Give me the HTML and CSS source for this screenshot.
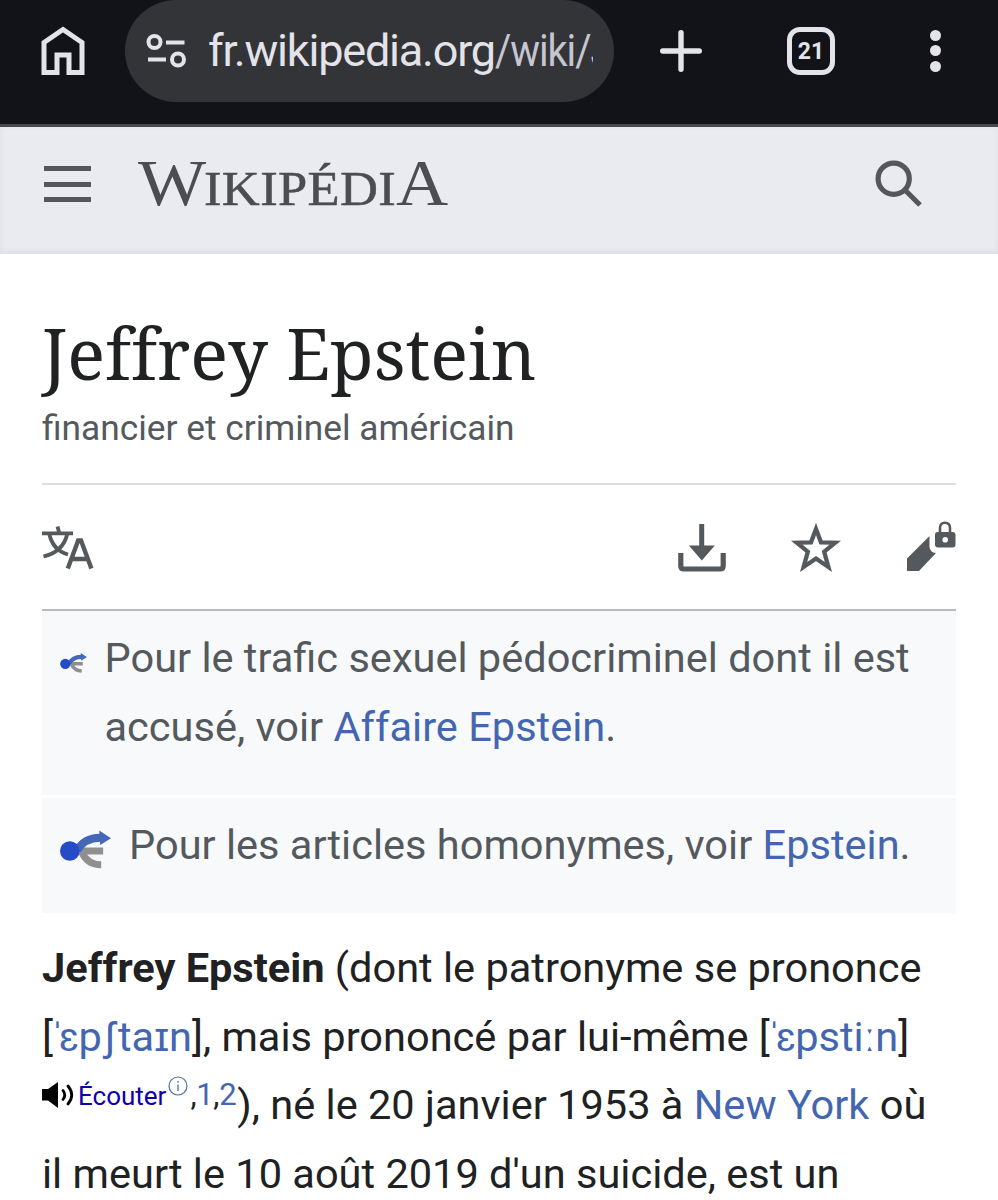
FILE: index.html
```
<!DOCTYPE html>
<html lang="fr">
<head>
  <meta charset="UTF-8">
  <meta name="viewport" content="width=device-width, initial-scale=1.0">
  <title>Jeffrey Epstein — Wikipédia</title>
  <link rel="stylesheet" href="styles.css">
</head>
<body>
  <!-- Browser bar -->
  <div class="browser-bar">
    <svg class="home-icon" width="44" height="50" viewBox="0 0 44 50">
      <path d="M3 46.500V16.500L22 3.500L41 16.500V46.500H28V29H16V46.500Z" fill="none" stroke="#e3e3e9" stroke-width="5"/>
    </svg>
    <div class="address">
      <svg class="tune-icon" width="42" height="36" viewBox="0 0 42 36" fill="none" stroke="#e3e3e9" stroke-width="4">
        <circle cx="8.500" cy="9" r="6"/>
        <path d="M20 9.500H38.500M2 26.500H20"/>
        <circle cx="32" cy="26.500" r="6"/>
      </svg>
      <div class="url"><span class="host">fr.wikipedia.org</span><span class="path">/wiki/J</span></div>
    </div>
    <svg class="plus-icon" width="42" height="42" viewBox="0 0 42 42" stroke="#e3e3e9" stroke-width="5.400" stroke-linecap="round">
      <path d="M21 2.700V39.300M2.700 21H39.300"/>
    </svg>
    <div class="tabs">21</div>
    <div class="dots"><i></i><i></i><i></i></div>
  </div>

  <!-- Site header -->
  <header class="site-header">
    <div class="burger"><i></i><i></i><i></i></div>
    <a class="wordmark"><span class="big">W</span><span class="small">IKIPÉDI</span><span class="big last">A</span></a>
    <svg class="search-icon" width="48" height="48" viewBox="0 0 48 48" fill="none" stroke="#55575b" stroke-width="5.200">
      <circle cx="18.700" cy="18.700" r="15.600"/>
      <path d="M29.500 29.500L45 45"/>
    </svg>
  </header>

  <main>
    <h1>Jeffrey Epstein</h1>
    <p class="subtitle">financier et criminel américain</p>

    <div class="actions">
      <svg class="lang-icon" width="52" height="44" viewBox="0 0 52 44" fill="none" stroke="#54595d" stroke-width="3.800">
        <path d="M15.500 .500L17 6M0 7.300H31M7.300 8C9.500 18 15.500 25.500 26 28.500M25.300 8C22.500 20 14 27.500 1.500 30.500"/>
        <path stroke-width="4.400" d="M25.800 42.500L36.200 14.500H39L49.400 42.500M30 33H45"/>
      </svg>
      <svg class="download-icon" width="48" height="48" viewBox="0 0 48 48">
        <path fill="#54595d" d="M21.200 0H26.200V21.500H36.800L23.800 36.500L10.900 21.500H21.200Z"/>
        <path fill="none" stroke="#54595d" stroke-width="5.200" d="M2.800 29V42Q2.800 45 5.800 45H42.200Q45.200 45 45.200 42V29"/>
      </svg>
      <svg class="star-icon" width="52" height="50" viewBox="0 0 52 50">
        <path fill="none" stroke="#54595d" stroke-width="4.300" d="M26 6L31 19.300L45.200 19.700L34.200 28.700L38.400 44L26 35.500L13.600 44L17.800 28.700L6.800 19.700L21 19.300Z"/>
      </svg>
      <svg class="edit-icon" width="50" height="51" viewBox="0 0 50 51">
        <path fill="#54595d" d="M1 37.500L23.500 15V26Q24 31.500 30 32L13 50H1Z"/>
        <path fill="none" stroke="#54595d" stroke-width="2.600" d="M34 12V7Q34 1.800 39 1.800T44 7V12"/>
        <path fill="#54595d" fill-rule="evenodd" d="M31.500 11H46.500Q49.500 11 49.500 14V23.500Q49.500 26.500 46.500 26.500H32Q29 26.500 29 23.500V14Q29 11 31.500 11ZM39.200 16A2.800 2.800 0 1 0 39.200 21.600A2.800 2.800 0 1 0 39.200 16Z"/>
      </svg>
    </div>

    <div class="hatnote first">
      <svg class="fork-icon" width="27" height="20" viewBox="0 0 52 39">
        <path fill="none" stroke="#8f8f8f" stroke-width="7" d="M21 21H44M22 22Q28 35 42 35"/>
        <path fill="none" stroke="#4467b8" stroke-width="8" d="M17 21Q25 7 42 7.500"/>
        <path fill="#4467b8" d="M40 0L52 8L41 15Z"/>
        <circle cx="10" cy="21" r="10" fill="#264bc8"/>
      </svg>
      <p>Pour le trafic sexuel pédocriminel dont il est<br>accusé, voir <a>Affaire Epstein</a>.</p>
    </div>
    <div class="hatnote second">
      <svg class="fork-icon" width="51" height="39" viewBox="0 0 52 39">
        <path fill="none" stroke="#8f8f8f" stroke-width="7" d="M21 21H44M22 22Q28 35 42 35"/>
        <path fill="none" stroke="#4467b8" stroke-width="8" d="M17 21Q25 7 42 7.500"/>
        <path fill="#4467b8" d="M40 0L52 8L41 15Z"/>
        <circle cx="10" cy="21" r="10" fill="#264bc8"/>
      </svg>
      <p>Pour les articles homonymes, voir <a>Epstein</a>.</p>
    </div>

    <div class="intro">
      <div class="line"><b>Jeffrey Epstein</b> (dont le patronyme se prononce</div>
      <div class="line">[<a><span class="stress">ˈ</span>ɛp<span class="esh">ʃ</span>taɪn</a>], mais prononcé par lui-même [<a><span class="stress">ˈ</span>ɛpstiːn</a>]</div>
      <div class="line"><span class="listen"><svg class="sound-icon" width="33" height="26" viewBox="0 0 33 26">
        <path d="M0 7H6L16 0V26L6 18.500H0Z"/>
        <path fill="none" stroke="#000" stroke-width="2.800" stroke-linecap="round" d="M21 8.500Q24.500 13 21 17.500M26 4Q33.500 13 26 22"/>
      </svg><a class="audio">Écouter</a><svg class="info-icon" width="20" height="20" viewBox="0 0 20 20">
        <circle cx="10" cy="10" r="9" fill="none" stroke="#4f6f9f" stroke-width="1.200"/>
        <path d="M10 8.500V15M10 5V6.800" stroke="#4f6f9f" stroke-width="1.300"/>
      </svg><span class="refs">,<a>1</a>,<a>2</a></span></span>), né le 20 janvier 1953 à <a>New York</a> où</div>
      <div class="line">il meurt le 10 août 2019 d'un suicide, est un</div>
    </div>
  </main>
</body>
</html>
```
FILE: styles.css
```
/* Reset */
body, h1, p {
  margin: 0;
  padding: 0;
}

* {
  box-sizing: border-box;
}

body {
  width: 998px;
  height: 1200px;
  overflow: hidden;
  background-color: #fff;
  color: #202122;
  font-family: Roboto, sans-serif;
  font-size: 41.550px;
}

svg {
  display: block;
  flex: none;
}

a {
  color: #4466b0;
  text-decoration: none;
}

/* Browser bar */
.browser-bar {
  display: flex;
  align-items: flex-start;
  height: 127px;
  background-color: #121318;
  border-bottom: 3px solid #47484c;
  padding-left: 41px;
}

.home-icon {
  margin-top: 26px;
}

.address {
  display: flex;
  width: 489px;
  height: 102px;
  margin-left: 40px;
  padding-left: 21px;
  background-color: #333438;
  border-radius: 51px;
}

.tune-icon {
  margin-top: 33px;
}

.url {
  width: 385px;
  margin-left: 20px;
  overflow: hidden;
  white-space: nowrap;
  font-size: 45px;
  letter-spacing: -1.200px;
  line-height: 102px;
  color: #e3e3e9;
}

.path {
  display: inline-block;
  color: #c6c5d0;
  transform: scaleX(0.88);
  transform-origin: left;
}

.plus-icon {
  margin: 30px 0 0 46px;
}

.tabs {
  width: 48px;
  height: 48px;
  margin: 27px 0 0 85px;
  border: 5px solid #e3e3e9;
  border-radius: 13px;
  color: #e3e3e9;
  font-size: 23px;
  font-weight: bold;
  line-height: 39px;
  text-align: center;
}

.dots {
  display: flex;
  flex-direction: column;
  gap: 4.500px;
  margin: 29.500px 0 0 94.500px;
}

.dots i {
  width: 11px;
  height: 11px;
  border-radius: 50%;
  background-color: #e3e3e9;
}

/* Site header */
.site-header {
  display: flex;
  height: 127px;
  padding: 0 75px 0 44px;
  background-color: #eaebf0;
  box-shadow: inset 0 -2px 6px rgba(0, 0, 0, 0.06);
}

.burger {
  display: flex;
  flex-direction: column;
  gap: 10.500px;
  width: 47px;
  margin-top: 39px;
}

.burger i {
  height: 5px;
  background-color: #55575b;
}

.wordmark {
  margin-left: 47px;
  color: #4c4d50;
  font-family: "Liberation Serif", serif;
  line-height: 112px;
  white-space: nowrap;
  transform: scaleX(1.095);
  transform-origin: left;
}

.wordmark .big {
  font-size: 66px;
  letter-spacing: -2px;
}

.wordmark .small {
  font-size: 48px;
  letter-spacing: 0.300px;
  -webkit-text-stroke: 0.5px #4c4d50;
}

.search-icon {
  margin: 33px 0 0 auto;
}

/* Article heading */
main {
  padding: 0 42px;
}

h1 {
  height: 147px;
  padding-top: 58px;
  font-family: "Noto Serif", "DejaVu Serif", serif;
  font-size: 70.600px;
  font-weight: normal;
  font-variant-ligatures: none;
  line-height: 82px;
  white-space: nowrap;
}

.subtitle {
  height: 84px;
  padding-top: 6px;
  border-bottom: 2px solid #dcdddf;
  color: #54595d;
  font-size: 35.300px;
  line-height: 42px;
}

.actions {
  display: flex;
  height: 126px;
  border-bottom: 2px solid #b8bbc0;
}

.lang-icon {
  margin-top: 41px;
}

.download-icon {
  margin: 39px 0 0 584px;
}

.star-icon {
  margin: 38px 0 0 64px;
}

.edit-icon {
  margin: 36px 0 0 auto;
}

/* Hatnotes */
.hatnote {
  display: flex;
  background-color: #f8f9fb;
  color: #54595d;
  line-height: 68.500px;
  white-space: nowrap;
  padding-left: 18px;
}

.hatnote.first {
  height: 184px;
  padding-top: 13px;
}

.hatnote.second {
  height: 115px;
  margin-top: 3px;
  padding-top: 13px;
}

.first .fork-icon {
  margin: 29px 17.500px 0 0;
}

.second .fork-icon {
  margin: 19px 18px 0 0;
}

/* Intro */
.intro {
  padding-top: 21px;
}

.line {
  height: 68.500px;
  line-height: 68.500px;
  white-space: nowrap;
}

.stress {
  margin: 0 -5px 0 -2.500px;
}

.esh {
  margin: 0 3.500px;
}

.listen {
  display: inline-flex;
  height: 40px;
  margin-right: 1px;
  vertical-align: 11px;
  font-size: 26px;
  line-height: 40px;
}

.sound-icon {
  margin: 6px 3px 0 0;
}

.audio {
  color: #1100aa;
}

.info-icon {
  margin: 0 2px 0 2px;
}

.refs {
  font-size: 31px;
  line-height: 37px;
  letter-spacing: -0.300px;
}
```
